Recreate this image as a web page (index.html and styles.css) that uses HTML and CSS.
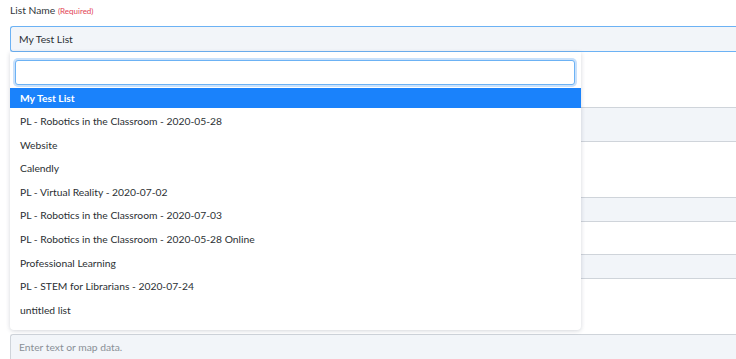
FILE: index.html
```html
<!DOCTYPE html>
<html lang="en">
<head>
  <meta charset="UTF-8">
  <meta name="viewport" content="width=device-width, initial-scale=1.0">
  <title>List Settings</title>
  <link rel="stylesheet" href="styles.css">
</head>
<body>
  <div class="form">
    <div class="field">
      <label class="field-label">List Name <span class="req">(Required)</span></label>
      <div class="select-wrap">
        <div class="select">My Test List</div>
        <div class="dropdown">
          <div class="search">
            <input type="text" class="search-input">
          </div>
          <ul class="options">
            <li class="option active">My Test List</li>
            <li class="option">PL - Robotics in the Classroom - 2020-05-28</li>
            <li class="option">Website</li>
            <li class="option">Calendly</li>
            <li class="option">PL - Virtual Reality - 2020-07-02</li>
            <li class="option">PL - Robotics in the Classroom - 2020-07-03</li>
            <li class="option">PL - Robotics in the Classroom - 2020-05-28 Online</li>
            <li class="option">Professional Learning</li>
            <li class="option">PL - STEM for Librarians - 2020-07-24</li>
            <li class="option">untitled list</li>
          </ul>
        </div>
      </div>
    </div>

    <!-- fields hidden behind the open dropdown -->
    <div class="field gap-lg">
      <div class="input tall"></div>
    </div>
    <div class="field gap-lg">
      <div class="input"></div>
    </div>
    <div class="field gap-sm">
      <div class="input"></div>
    </div>
    <div class="field gap-lg">
      <div class="input textarea">Enter text or map data.</div>
    </div>
  </div>
</body>
</html>
```

FILE: styles.css
```css
/* Reset */
* {
  margin: 0;
  padding: 0;
  box-sizing: border-box;
}
body {
  background: #fff;
  font-family: Lato, "Open Sans", Arial, sans-serif;
  color: #2b2f33;
  overflow: hidden;
}
.form {
  padding-left: 10px;
}
/* Labels */
.field-label {
  display: block;
  font-size: 10.3px;
  line-height: 14px;
  padding-top: 3px;
  margin-bottom: 8px;
  color: #33373b;
}
.req {
  color: #e23f52;
  font-size: 8px;
}
/* Select */
.select-wrap {
  position: relative;
}
.select {
  height: 26px;
  border: 1px solid #6cb2f4;
  border-right: none;
  border-radius: 3px 0 0 3px;
  background: #f2f5f9;
  padding: 0 8px;
  font-size: 10.3px;
  line-height: 24px;
  color: #2b2f33;
}
.dropdown {
  position: absolute;
  top: 26px;
  left: 0;
  width: 571px;
  height: 278px;
  background: #fff;
  border-radius: 0 0 4px 4px;
  box-shadow: 0 1px 4px rgba(60, 70, 90, 0.22);
  z-index: 5;
}
.search {
  padding: 8px 5px 3px;
}
.search-input {
  display: block;
  width: 560px;
  height: 25px;
  border: 1px solid #6cb2f4;
  border-radius: 3px;
  box-shadow: 0 0 0 2px #c9e1fb;
  outline: none;
}
.options {
  list-style: none;
}
.option {
  height: 23.6px;
  padding: 0 10px;
  font-size: 10.3px;
  line-height: 23.6px;
  color: #2b2f33;
  white-space: nowrap;
}
.option.active {
  height: 20px;
  line-height: 20px;
  margin-bottom: 2px;
  background: #1a82fb;
  color: #fff;
  font-weight: bold;
}
/* Hidden fields */
.gap-lg {
  margin-top: 55px;
}
.gap-sm {
  margin-top: 32px;
}
.input {
  height: 25px;
  border: 1px solid #cfd4da;
  border-right: none;
  border-radius: 3px 0 0 3px;
  background: #f2f5f9;
}
.input.tall {
  height: 35px;
}
.input.textarea {
  height: 40px;
  padding: 6px 8px;
  font-size: 10.3px;
  color: #8a9097;
}
```
